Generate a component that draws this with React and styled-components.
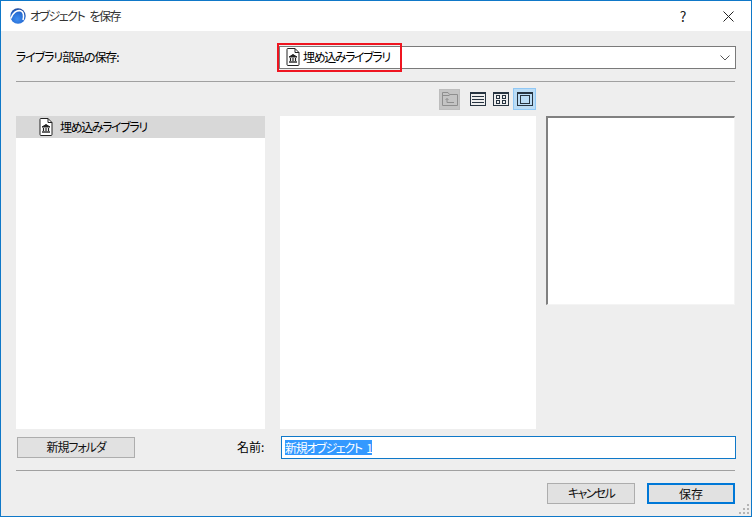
import React from 'react';
import styled, { createGlobalStyle } from 'styled-components';

const GlobalStyle = createGlobalStyle`
  html, body {
    margin: 0;
    padding: 0;
    background: #eeeeee;
  }
  * {
    box-sizing: border-box;
  }
`;

const Window = styled.div`
  position: relative;
  width: 752px;
  height: 517px;
  display: flex;
  flex-direction: column;
  background: #eeeeee;
  border: 1px solid #0f78c8;
  font-family: "Noto Sans CJK JP", "Liberation Sans", sans-serif;
  font-size: 12px;
  font-feature-settings: "palt";
  color: #000;
`;

// Japanese UI text in the reference is narrower than Noto, so each label gets its own tracking
const Text = styled.span`
  letter-spacing: ${p => p.$track ?? 0}px;
  word-spacing: 4px;
  margin-top: -2px;
  white-space: nowrap;
`;

const TitleBar = styled.div`
  height: 30px;
  flex: none;
  display: flex;
  align-items: center;
  background: #fff;
  padding-left: 9px;
`;

const Title = styled(Text)`
  margin-left: 4px;
  color: #333;
`;

const TitleButton = styled.button`
  width: ${p => p.$w}px;
  height: 30px;
  border: none;
  background: none;
  padding: 0;
  display: flex;
  align-items: center;
  justify-content: center;
  font: inherit;
  font-size: 14px;
  color: #222;
`;

const TitleSpacer = styled.div`
  flex: 1;
`;

const Body = styled.div`
  flex: 1;
  display: flex;
  flex-direction: column;
  padding: 0 15px;
`;

const LibraryRow = styled.div`
  height: 51px;
  flex: none;
  display: flex;
  align-items: center;
  padding-top: 2px;
  border-bottom: 1px solid #a0a0a0;
  margin-right: 1px;
`;

const LibraryLabel = styled.div`
  width: 263px;
  flex: none;
  display: flex;
`;

const SelectBox = styled.div`
  position: relative;
  width: 457px;
  height: 23px;
  flex: none;
  margin-right: -1px;
  display: flex;
  align-items: center;
  gap: 3px;
  padding-left: 6px;
  background: #fff;
  border: 1px solid #7a7a7a;
`;

const Highlight = styled.div`
  position: absolute;
  left: -3px;
  top: -4px;
  width: 125px;
  height: 29px;
  border: 2px solid #ef1520;
  pointer-events: none;
`;

const Chevron = styled.svg`
  position: absolute;
  right: 5px;
  top: 8px;
`;

const Toolbar = styled.div`
  height: 34px;
  flex: none;
  display: flex;
  align-items: center;
  padding-left: 423px;
`;

const FolderUp = styled.div`
  width: 21px;
  height: 21px;
  display: flex;
  align-items: center;
  justify-content: center;
  background: #c4c4c4;
  border: 1px solid #bdbdbd;
  margin-right: 8px;
`;

const ViewButton = styled.div`
  width: ${p => (p.$active ? 23 : 20)}px;
  height: 22px;
  display: flex;
  align-items: center;
  justify-content: center;
  margin-left: ${p => (p.$active ? -1 : 0)}px;
  margin-right: ${p => (p.$active ? 0 : 3)}px;
  background: ${p => (p.$active ? '#bbdcf5' : 'transparent')};
  border: 1px solid ${p => (p.$active ? '#90c8f6' : 'transparent')};
`;

const Panes = styled.div`
  display: grid;
  grid-template-columns: 249px 256px 189px;
  column-gap: 15px;
  height: 313px;
  flex: none;
`;

const List = styled.div`
  background: #fff;
`;

const ListRow = styled.div`
  height: 22px;
  display: flex;
  align-items: center;
  gap: 7px;
  padding-left: 23px;
  background: #d8d8d8;
`;

const FileList = styled.div`
  background: #fff;
`;

const Preview = styled.div`
  height: 189px;
  margin-left: -5px;
  width: 189px;
  background: #fff;
  border: 2px solid #808080;
  border-right: 1px solid #f4f4f4;
  border-bottom: 1px solid #f4f4f4;
`;

const NameRow = styled.div`
  height: 42px;
  flex: none;
  display: flex;
  align-items: center;
  padding-left: 1px;
  padding-bottom: 5px;
  border-bottom: 1px solid #a0a0a0;
  margin-right: 1px;
`;

const PlainButton = styled.button`
  width: ${p => p.$w}px;
  height: 21px;
  flex: none;
  padding: 0 0 2px;
  font: inherit;
  color: #111;
  background: #e1e1e1;
  border: ${p => (p.$primary ? '2px solid #0078d7' : '1px solid #adadad')};
  letter-spacing: ${p => p.$track ?? 0}px;
`;

const NameLabel = styled.div`
  margin-left: 102px;
  width: 44px;
  flex: none;
  display: flex;
`;

const NameInput = styled.div`
  width: 455px;
  height: 23px;
  flex: none;
  margin-right: -1px;
  display: flex;
  align-items: center;
  padding-left: 3px;
  background: #fff;
  border: 1px solid #0f78c8;
`;

const Selected = styled.span`
  background: #3399ff;
  color: #fff;
  line-height: 15px;
  letter-spacing: -1.3px;
  word-spacing: 3px;
  white-space: nowrap;
`;

const Footer = styled.div`
  flex: 1;
  display: flex;
  justify-content: flex-end;
  align-items: flex-start;
  gap: 12px;
  padding-top: 12px;
  padding-right: 1px;
`;

const Grip = styled.svg`
  position: absolute;
  right: 1px;
  bottom: 1px;
`;

const Logo = () => (
  <svg width="16" height="16" viewBox="0 0 16 16">
    <defs>
      <radialGradient id="ball" cx="0.45" cy="0.7" r="0.75">
        <stop offset="0" stopColor="#3f8ef0" />
        <stop offset="0.65" stopColor="#2468cf" />
        <stop offset="1" stopColor="#1c3f8c" />
      </radialGradient>
    </defs>
    <circle cx="8" cy="8" r="7.7" fill="url(#ball)" />
    <path d="M.8 10.5C2.5 5 7 1.8 10.5 2.8C13.6 3.8 14 8 13 12" fill="none" stroke="#fff" strokeWidth="1.6" />
  </svg>
);

const LibraryIcon = () => (
  <svg width="14" height="18" viewBox="0 0 14 18" fill="none" stroke="#222">
    <path d="M1.5.5H9L13 4.5V16.5Q13 17.5 12 17.5H2Q1 17.5 1 16.5V1.5Q1 .5 1.5 .5Z" fill="#fff" />
    <path d="M9 .5V4.5H13" />
    <path d="M7 6.5L11 9H3Z" fill="#222" />
    <path d="M4.5 10V13M7 10V13M9.5 10V13" strokeWidth="1.2" />
    <path d="M3 14H11" strokeWidth="1.4" />
  </svg>
);

const FolderUpIcon = () => (
  <svg width="16" height="14" viewBox="0 0 16 14" fill="none" stroke="#8e8e8e">
    <path d="M.5 13.5V.5H6L7.5 2.5H15.5V13.5Z" />
    <path d="M.5 3.5H7.5" />
    <path d="M5 10.5V6.5M3.5 8L5 6.5L6.5 8M5 10.5H12" />
  </svg>
);

const ListIcon = () => (
  <svg width="16" height="14" viewBox="0 0 16 14" fill="none" stroke="#263340">
    <rect x=".5" y=".5" width="15" height="13" />
    <path d="M0 1H16" strokeWidth="2" />
    <path d="M2 4.5H14M2 7.5H14M2 10.5H14" />
  </svg>
);

const GridIcon = () => (
  <svg width="16" height="14" viewBox="0 0 16 14" fill="none" stroke="#263340">
    <rect x=".5" y=".5" width="15" height="13" />
    <path d="M0 1H16" strokeWidth="2" />
    <rect x="3.5" y="3.5" width="3" height="3" />
    <rect x="9.5" y="3.5" width="3" height="3" />
    <rect x="3.5" y="8.5" width="3" height="3" />
    <rect x="9.5" y="8.5" width="3" height="3" />
  </svg>
);

const LargeIcon = () => (
  <svg width="16" height="14" viewBox="0 0 16 14" fill="none" stroke="#263340">
    <rect x=".5" y=".5" width="15" height="13" />
    <path d="M0 1H16" strokeWidth="2" />
    <rect x="3.5" y="3.5" width="9" height="8" />
  </svg>
);

export default function App() {
  return (
    <>
      <GlobalStyle />
      <Window>
        <TitleBar>
          <Logo />
          <Title $track={-1.5}>オブジェクト を保存</Title>
          <TitleSpacer />
          <TitleButton $w={46}>?</TitleButton>
          <TitleButton $w={45}>
            <svg width="11" height="11" viewBox="0 0 11 11" stroke="#222" fill="none">
              <path d="M.5.5L10.5 10.5M10.5.5L.5 10.5" />
            </svg>
          </TitleButton>
        </TitleBar>
        <Body>
          <LibraryRow>
            <LibraryLabel><Text $track={-1.1}>ライブラリ部品の保存:</Text></LibraryLabel>
            <SelectBox>
              <LibraryIcon />
              <Text $track={-1.4}>埋め込みライブラリ</Text>
              <Highlight />
              <Chevron width="10" height="6" viewBox="0 0 10 6" fill="none" stroke="#555">
                <path d="M.5.5L5 5L9.5.5" />
              </Chevron>
            </SelectBox>
          </LibraryRow>
          <Toolbar>
            <FolderUp><FolderUpIcon /></FolderUp>
            <ViewButton><ListIcon /></ViewButton>
            <ViewButton><GridIcon /></ViewButton>
            <ViewButton $active><LargeIcon /></ViewButton>
          </Toolbar>
          <Panes>
            <List>
              <ListRow>
                <LibraryIcon />
                <Text $track={-1.4}>埋め込みライブラリ</Text>
              </ListRow>
            </List>
            <FileList />
            <Preview />
          </Panes>
          <NameRow>
            <PlainButton $w={118} $track={-1.1}>新規フォルダ</PlainButton>
            <NameLabel><Text>名前:</Text></NameLabel>
            <NameInput><Selected>新規オブジェクト 1</Selected></NameInput>
          </NameRow>
          <Footer>
            <PlainButton $w={88} $track={-1.6}>キャンセル</PlainButton>
            <PlainButton $w={88} $primary>保存</PlainButton>
          </Footer>
        </Body>
        <Grip width="11" height="11" viewBox="0 0 11 11" fill="#b4b4b4">
          <rect x="8" y="0" width="2" height="2" />
          <rect x="4" y="4" width="2" height="2" />
          <rect x="8" y="4" width="2" height="2" />
          <rect x="0" y="8" width="2" height="2" />
          <rect x="4" y="8" width="2" height="2" />
          <rect x="8" y="8" width="2" height="2" />
        </Grip>
      </Window>
    </>
  );
}
